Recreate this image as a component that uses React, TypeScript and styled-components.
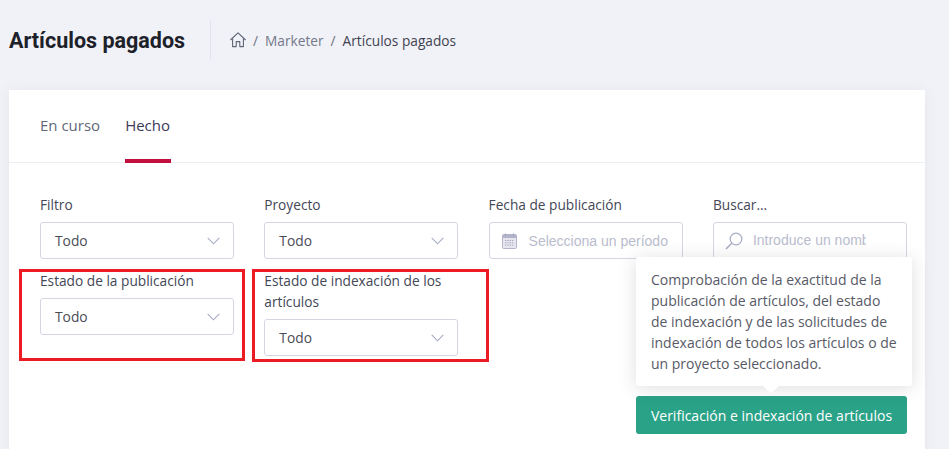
import React from 'react';
import styled, { createGlobalStyle } from 'styled-components';

const GlobalStyle = createGlobalStyle`
  html, body {
    margin: 0;
    padding: 0;
    height: 100%;
    overflow: hidden;
    background: #f1f2f7;
    font-family: "Open Sans", "Noto Sans", sans-serif;
    font-size: 14px;
    color: #3b3f4c;
  }
  * { box-sizing: border-box; }
`;

const Page = styled.div`
  padding: 0 24px 0 9px;
  height: 449px;
  overflow: hidden;
`;

const Header = styled.header`
  display: flex;
  align-items: center;
  height: 40px;
  margin: 20px 0 30px;
`;

const Title = styled.h1`
  margin: 0;
  width: 202px;
  height: 40px;
  line-height: 41px;
  border-right: 1px solid #e3e4ec;
  font-family: Roboto, sans-serif;
  font-size: 21.5px;
  font-weight: 700;
  color: #1d2129;
`;

const Crumbs = styled.nav`
  display: flex;
  align-items: center;
  margin-left: 19px;
  font-size: 13.7px;
  color: #3f4350;
`;

const Crumb = styled.span<{ $muted?: boolean }>`
  color: ${(p) => (p.$muted ? '#74788a' : '#3f4350')};
`;

const Slash = styled.span`
  margin: 0 7px;
  color: #6d7180;
`;

const Card = styled.main`
  position: relative;
  background: #fff;
  height: 400px;
  box-shadow: 0 0 14px rgba(60, 64, 90, 0.06);
`;

const Tabs = styled.div`
  display: flex;
  gap: 25px;
  height: 73px;
  padding-left: 31px;
  border-bottom: 1px solid #eceef3;
`;

const Tab = styled.div<{ $active?: boolean }>`
  position: relative;
  height: 73px;
  line-height: 71px;
  font-size: 15px;
  color: ${(p) => (p.$active ? '#3c3a58' : '#5f6878')};
  ${(p) =>
    p.$active &&
    `
    &::after {
      content: '';
      position: absolute;
      left: 0;
      right: -1px;
      bottom: 0;
      height: 4px;
      background: #c2103e;
    }
  `}
`;

const Filters = styled.div`
  display: grid;
  grid-template-columns: repeat(4, 194px);
  column-gap: 30.3px;
  row-gap: 11px;
  padding: 31px 0 0 31px;
  align-items: start;
`;

const Field = styled.div`
  display: flex;
  flex-direction: column;
  gap: 7px;
`;

const Label = styled.label`
  line-height: 21px;
  font-size: 13.7px;
  color: #434756;
`;

const Control = styled.div`
  display: flex;
  align-items: center;
  height: 37px;
  border: 1px solid #d5d6e3;
  border-radius: 3px;
  background: #fff;
  overflow: hidden;
`;

const SelectBox = styled(Control)`
  justify-content: space-between;
  padding: 0 13px 0 14px;
  font-size: 13.8px;
  color: #4a4b57;
`;

const IconBox = styled(Control)<{ $pad: number; $gap: number }>`
  gap: ${(p) => p.$gap}px;
  padding: 0 10px 0 ${(p) => p.$pad}px;
`;

const TextInput = styled.input`
  flex: 1;
  min-width: 0;
  border: 0;
  outline: 0;
  padding: 0;
  background: transparent;
  font-family: "Liberation Sans", Arial, sans-serif;
  font-size: 14px;
  &::placeholder {
    color: #b9bccd;
    opacity: 1;
  }
`;

const SearchInput = styled(TextInput)`
  max-width: 113px;
  margin-bottom: 2px;
`;

const Actions = styled.div`
  display: flex;
  justify-content: flex-end;
  margin-top: 40px;
  padding-right: 18px;
`;

const VerifyWrap = styled.div`
  position: relative;
`;

const VerifyButton = styled.button`
  display: block;
  width: 271px;
  height: 38px;
  border: 0;
  border-radius: 3px;
  background: #2aa287;
  color: #fff;
  font-family: "Open Sans", sans-serif;
  font-size: 14px;
`;

const Tooltip = styled.div`
  position: absolute;
  left: 0;
  bottom: 48px;
  width: 276px;
  height: 129px;
  padding: 12px 15px;
  border-radius: 3px;
  background: #fff;
  box-shadow: 0 2px 18px rgba(50, 50, 70, 0.16);
  font-size: 14px;
  line-height: 21px;
  color: #575a66;

  &::after {
    content: '';
    position: absolute;
    left: 127px;
    bottom: -7px;
    border-left: 8px solid transparent;
    border-right: 8px solid transparent;
    border-top: 7px solid #fff;
  }
`;

const Marker = styled.div<{ $left: number; $width: number; $height: number }>`
  position: absolute;
  top: 179px;
  left: ${(p) => p.$left}px;
  width: ${(p) => p.$width}px;
  height: ${(p) => p.$height}px;
  border: 3px solid #ed1c24;
  pointer-events: none;
`;

const Chevron = () => (
  <svg width="13" height="8" viewBox="0 0 13 8" fill="none" stroke="#a5a9c4" strokeWidth="1.1">
    <path d="M0.7 0.8 L6.5 6.8 L12.3 0.8" />
  </svg>
);

const HomeIcon = () => (
  <svg width="16" height="16" viewBox="0 0 16 16" fill="none" stroke="#5f6475" strokeWidth="1.1" strokeLinejoin="round" style={{ flex: 'none' }}>
    <path d="M0.4 8 L8 0.9 L15.6 8" />
    <path d="M2.6 6.4 V14.6 H6.2 V9.6 H9.8 V14.6 H13.4 V6.4" />
  </svg>
);

const CalendarIcon = () => (
  <svg width="15" height="16" viewBox="0 0 15 16" style={{ flex: 'none' }}>
    <rect x="0.5" y="1.5" width="14" height="14" rx="1" fill="#e6e6f0" stroke="#b3b4ca" />
    <rect x="1" y="2" width="13" height="3" fill="#b3b4ca" />
    <path d="M3.5 0.5 V3 M11.5 0.5 V3" stroke="#a3a4bd" />
    <path d="M3 7.5 H12 M3 9.8 H12 M3 12.1 H12" stroke="#a3a4bd" strokeDasharray="1.3 1" />
  </svg>
);

const SearchIcon = () => (
  <svg width="18" height="18" viewBox="0 0 18 18" fill="none" stroke="#a9adc4" strokeWidth="1.2" style={{ flex: 'none' }}>
    <circle cx="11" cy="7" r="5.8" />
    <path d="M6.8 11.2 L1 17" strokeWidth="1.6" />
  </svg>
);

const SelectField = ({ label }: { label: string }) => (
  <Field>
    <Label>{label}</Label>
    <SelectBox>
      <span>Todo</span>
      <Chevron />
    </SelectBox>
  </Field>
);

export default function App() {
  return (
    <Page>
      <GlobalStyle />
      <Header>
        <Title>Artículos pagados</Title>
        <Crumbs>
          <HomeIcon />
          <Slash>/</Slash>
          <Crumb $muted>Marketer</Crumb>
          <Slash>/</Slash>
          <Crumb>Artículos pagados</Crumb>
        </Crumbs>
      </Header>
      <Card>
        <Tabs>
          <Tab>En curso</Tab>
          <Tab $active>Hecho</Tab>
        </Tabs>
        <Filters>
          <SelectField label="Filtro" />
          <SelectField label="Proyecto" />
          <Field>
            <Label>Fecha de publicación</Label>
            <IconBox $pad={12} $gap={12}>
              <CalendarIcon />
              <TextInput placeholder="Selecciona un período" />
            </IconBox>
          </Field>
          <Field>
            <Label>Buscar...</Label>
            <IconBox $pad={11} $gap={10}>
              <SearchIcon />
              <SearchInput placeholder="Introduce un nombre" />
            </IconBox>
          </Field>
          <SelectField label="Estado de la publicación" />
          <SelectField label="Estado de indexación de los artículos" />
        </Filters>
        <Actions>
          <VerifyWrap>
            <Tooltip>
              Comprobación de la exactitud de la publicación de artículos, del estado de indexación y de las solicitudes de indexación de todos los artículos o de un proyecto seleccionado.
            </Tooltip>
            <VerifyButton>Verificación e indexación de artículos</VerifyButton>
          </VerifyWrap>
        </Actions>
        <Marker $left={10} $width={226} $height={92} />
        <Marker $left={243} $width={237} $height={93} />
      </Card>
    </Page>
  );
}
